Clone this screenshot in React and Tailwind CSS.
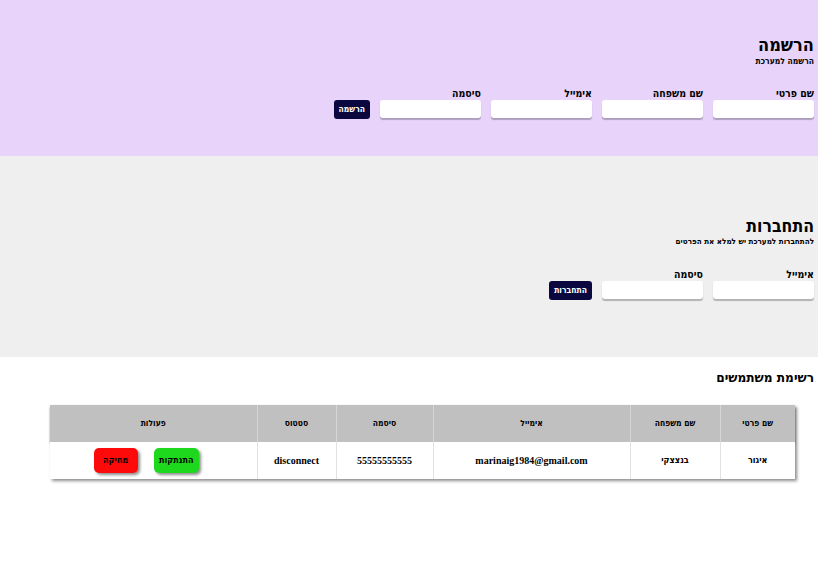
import React from 'react';

const serif = { fontFamily: '"Liberation Serif", "DejaVu Serif", serif' };
const heb = { fontFamily: '"DejaVu Sans Condensed", "DejaVu Sans", sans-serif', fontStretch: 'condensed' };

function Field({ label }) {
  return (
    <div className="flex flex-col items-start">
      <label className="text-[10.5px] font-bold leading-[12px] mb-[1px]" style={heb}>{label}</label>
      <input className="w-[101px] h-[18px] bg-white rounded-[3px] shadow-[0_2px_1px_rgba(0,0,0,0.25)] outline-none" />
    </div>
  );
}

function NavyButton({ children }) {
  return (
    <button
      className="h-[19px] px-[5px] bg-[#0b0840] text-white text-[8.5px] font-bold rounded-[3px] self-end mb-[-1px]"
      style={heb}
    >
      {children}
    </button>
  );
}

const users = [
  {
    first: 'איגור',
    last: 'בנצצקי',
    email: 'marinaig1984@gmail.com',
    password: '55555555555',
    status: 'disconnect',
  },
];

export default function App() {
  return (
    <div dir="rtl" className="w-full min-h-[570px] bg-white text-black" style={serif}>
      {/* Register */}
      <section className="bg-[#e8d4fb] h-[156px] pr-[4px] pt-[34px]" style={heb}>
        <h2 className="text-[18px] font-bold leading-[22px]">הרשמה</h2>
        <p className="text-[8.5px] font-bold leading-[10px]">הרשמה למערכת</p>
        <div className="flex gap-[10px] mt-[21px]">
          <Field label="שם פרטי" />
          <Field label="שם משפחה" />
          <Field label="אימייל" />
          <Field label="סיסמה" />
          <NavyButton>הרשמה</NavyButton>
        </div>
      </section>

      {/* Login */}
      <section className="bg-[#efefef] h-[201px] pr-[4px] pt-[59px]" style={heb}>
        <h2 className="text-[17.5px] font-bold leading-[22px]">התחברות</h2>
        <p className="text-[8px] font-bold leading-[10px]">להתחברות למערכת יש למלא את הפרטים</p>
        <div className="flex gap-[10px] mt-[21px]">
          <Field label="אימייל" />
          <Field label="סיסמה" />
          <NavyButton>התחברות</NavyButton>
        </div>
      </section>

      {/* Users list */}
      <section className="pr-[4px] pt-[11px]">
        <h3 className="text-[13.5px] font-bold leading-[18px]" style={heb}>רשימת משתמשים</h3>
        <div className="mr-[19px] mt-[19px] w-[745px] shadow-[2px_2px_3px_rgba(0,0,0,0.45)]">
          <table className="w-full border-collapse text-center">
            <thead>
              <tr className="bg-[#c0c0c0] h-[37px] text-[8.5px] font-bold shadow-[0_2px_2px_rgba(0,0,0,0.35)]" style={heb}>
                <th className="w-[75px] border-l border-[#d6d6d6]">שם פרטי</th>
                <th className="w-[90px] border-l border-[#d6d6d6]">שם משפחה</th>
                <th className="w-[197px] border-l border-[#d6d6d6]">אימייל</th>
                <th className="w-[97px] border-l border-[#d6d6d6]">סיסמה</th>
                <th className="w-[79px] border-l border-[#d6d6d6]">סטטוס</th>
                <th className="w-[207px]">פעולות</th>
              </tr>
            </thead>
            <tbody>
              {users.map((u) => (
                <tr key={u.email} className="h-[37px] bg-white font-bold">
                  <td className="border-l border-[#e2e2e2] text-[9px]" style={heb}>{u.first}</td>
                  <td className="border-l border-[#e2e2e2] text-[9px]" style={heb}>{u.last}</td>
                  <td className="border-l border-[#e2e2e2] text-[10px]">{u.email}</td>
                  <td className="border-l border-[#e2e2e2] text-[10px]">{u.password}</td>
                  <td className="border-l border-[#e2e2e2] text-[10px]">{u.status}</td>
                  <td>
                    <div className="flex justify-center gap-[16px] pr-[14px]" style={heb}>
                      <button className="w-[45px] h-[25px] bg-[#1ed81e] rounded-[5px] text-[9px] font-bold shadow-[2px_2px_3px_rgba(0,0,0,0.45)]">
                        התנתקות
                      </button>
                      <button className="w-[44px] h-[25px] bg-[#ff0a0a] rounded-[5px] text-[9px] font-bold shadow-[2px_2px_3px_rgba(0,0,0,0.45)]">
                        מחיקה
                      </button>
                    </div>
                  </td>
                </tr>
              ))}
            </tbody>
          </table>
        </div>
      </section>
    </div>
  );
}
